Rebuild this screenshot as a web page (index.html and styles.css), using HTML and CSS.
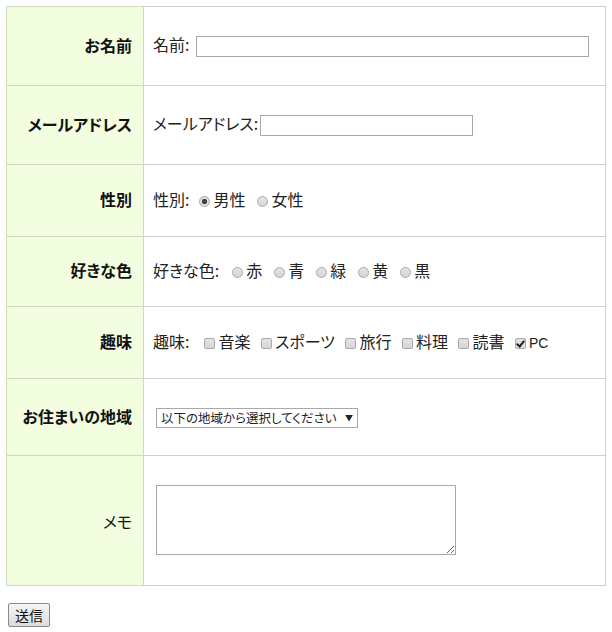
FILE: index.html
```html
<!DOCTYPE html>
<html lang="ja">
<head>
<meta charset="utf-8">
<link rel="stylesheet" href="styles.css">
</head>
<body>
<form class="form">
<table class="tbl">
<tr class="r1"><th>お名前</th><td><span class="pre p-name">名前:</span><input type="text" class="in-name"></td></tr>
<tr class="r2"><th>メールアドレス</th><td><span class="pre p-mail">メールアドレス:</span><input type="text" class="in-mail"></td></tr>
<tr class="r3"><th>性別</th><td><span class="pre p-gender">性別:</span><label class="opt"><input type="radio" name="g" class="rd" checked>男性</label><label class="opt"><input type="radio" name="g" class="rd">女性</label></td></tr>
<tr class="r4"><th>好きな色</th><td><span class="pre p-color">好きな色:</span><label class="opt"><input type="radio" name="c" class="rd">赤</label><label class="opt"><input type="radio" name="c" class="rd">青</label><label class="opt"><input type="radio" name="c" class="rd">緑</label><label class="opt"><input type="radio" name="c" class="rd">黄</label><label class="opt"><input type="radio" name="c" class="rd">黒</label></td></tr>
<tr class="r5"><th>趣味</th><td><span class="pre p-hobby">趣味:</span><label class="opt opt-cb"><input type="checkbox" class="cb">音楽</label><label class="opt opt-cb"><input type="checkbox" class="cb">スポーツ</label><label class="opt opt-cb"><input type="checkbox" class="cb">旅行</label><label class="opt opt-cb"><input type="checkbox" class="cb">料理</label><label class="opt opt-cb"><input type="checkbox" class="cb">読書</label><label class="opt opt-cb"><input type="checkbox" class="cb" checked><span class="latin">PC</span></label></td></tr>
<tr class="r6"><th>お住まいの地域</th><td><span class="sel"><span class="sel-text">以下の地域から選択してください</span><span class="arrow">▼</span></span></td></tr>
<tr class="r7"><th>メモ</th><td><textarea class="memo"></textarea></td></tr>
</table>
<button type="button" class="btn">送信</button>
</form>
</body>
</html>
```
FILE: styles.css
```css
body {
  margin: 6px;
  font-family: "Noto Sans CJK JP", "Liberation Sans", sans-serif;
  font-size: 16px;
  color: #222;
  background: #fff;
  font-feature-settings: "palt";
}
.tbl {
  border-collapse: collapse;
  width: 600px;
}
.tbl th, .tbl td {
  border: 1px solid #cfcfcf;
  padding: 0 0 3px 0;
  vertical-align: middle;
}
.tbl th {
  width: 125px;
  background: #f3fddf;
  text-align: right;
  padding-right: 11px;
  font-weight: bold;
  font-size: 16px;
  color: #111;
  border-color: #d0d8c0;
}
.tbl td {
  padding-left: 9px;
  white-space: nowrap;
}
.r1 { height: 79px; }
.r2 { height: 79px; }
.r3 { height: 72px; }
.r4 { height: 70px; }
.r5 { height: 72px; }
.r6 { height: 77px; }
.r7 { height: 130px; }
.r7 th, .r7 td { padding-bottom: 0; }
.r7 th { font-weight: normal; }
.pre { margin-right: 3px; }
.p-name { margin-right: 7px; }
.p-mail { margin-right: 2px; }
.p-gender { margin-right: 8px; }
.p-color { margin-right: 11px; }
.p-hobby { margin-right: 13px; }
input[type="text"] {
  height: 21px;
  box-sizing: border-box;
  border: 1px solid #a9a9a9;
  vertical-align: middle;
  margin: 0;
}
.in-name { width: 393px; }
.in-mail { width: 213px; }
.opt { margin-right: 10px; }
.opt-cb { margin-right: 8.5px; }
.rd, .cb {
  appearance: none;
  -webkit-appearance: none;
  width: 11px;
  height: 11px;
  margin: 0 3px 0 2px;
  vertical-align: -1px;
  border: 1px solid #aaa;
  background: linear-gradient(#e4e4e4, #d6d6d6);
  box-sizing: border-box;
}
.rd { border-radius: 50%; }
.cb { border-radius: 2px; }
.rd:checked {
  background: radial-gradient(circle, #444 0 2.5px, #e0e0e0 3px);
}
.cb:checked {
  background: #e0e0e0;
  position: relative;
}
.cb:checked::after {
  content: "";
  position: absolute;
  left: 2px;
  top: 0px;
  width: 3px;
  height: 6px;
  border: solid #222;
  border-width: 0 2px 2px 0;
  transform: rotate(40deg);
}
.latin { font-family: "Liberation Sans", sans-serif; font-size: 14px; }
.sel {
  display: inline-flex;
  align-items: center;
  justify-content: space-between;
  margin-left: 3px;
  border: 1px solid #a9a9a9;
  height: 20px;
  box-sizing: border-box;
  font-size: 12.5px;
  padding: 0 4px 0 4px;
  width: 202px;
  background: #fff;
  vertical-align: middle;
}
.sel-text { white-space: nowrap; }
.arrow { font-size: 8px; }
.memo {
  display: block;
  margin-left: 3px;
  margin-top: -2px;
  width: 300px;
  height: 70px;
  box-sizing: border-box;
  border: 1px solid #a9a9a9;
  resize: both;
}
.btn {
  margin: 17px 0 0 2px;
  height: 24px;
  width: 42px;
  font-family: "Noto Sans CJK JP", sans-serif;
  font-size: 14px;
  padding: 0;
  border: 1px solid #8a8a8a;
  border-radius: 2px;
  background: linear-gradient(#f6f6f6, #dcdcdc);
  color: #111;
}
```
